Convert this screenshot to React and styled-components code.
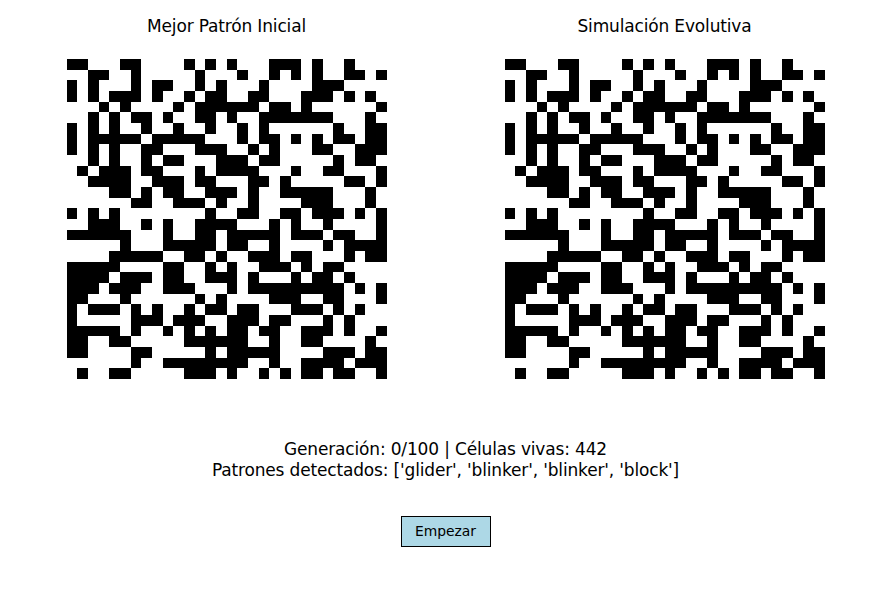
import React from 'react'
import styled, { createGlobalStyle } from 'styled-components'

const GlobalStyle = createGlobalStyle`
  html, body {
    margin: 0;
    padding: 0;
    background: #fff;
  }
`

const Figure = styled.div`
  width: 891px;
  height: 593px;
  box-sizing: border-box;
  padding-top: 16px;
  display: flex;
  flex-direction: column;
  align-items: center;
  font-family: "DejaVu Sans", sans-serif;
  color: #000;
  overflow: hidden;
`

const Panels = styled.div`
  display: flex;
  gap: 118px;
`

const Panel = styled.div`
  width: 320px;
  display: flex;
  flex-direction: column;
  align-items: center;
  gap: 22px;
`

const Title = styled.div`
  font-size: 17px;
  letter-spacing: -0.16px;
  line-height: 21px;
  white-space: nowrap;
`

const Board = styled.div`
  width: 320px;
  height: 320px;
  display: grid;
  grid-template-columns: repeat(30, 1fr);
  grid-template-rows: repeat(30, 1fr);
`

const Cell = styled.div`
  background: ${(p) => (p.$alive ? '#000' : '#fff')};
`

const Status = styled.div`
  margin-top: 60px;
  font-size: 17px;
  letter-spacing: -0.16px;
  line-height: 21px;
  text-align: center;
  white-space: nowrap;
`

const StartButton = styled.button`
  margin-top: 35px;
  width: 90px;
  height: 31px;
  padding: 0 0 2px;
  box-sizing: border-box;
  background: #add8e6;
  border: 1px solid #000;
  border-radius: 0;
  font-family: inherit;
  font-size: 13.89px;
  color: #000;
`

// alive columns for each row of the 30x30 board, as [from, to] runs
const RUNS = [
  [[0, 1], [5, 6], [11], [13], [15], [19, 21], [23], [26]],
  [[2, 3], [6], [12], [16], [19], [21], [23], [26, 27], [29]],
  [[0], [2], [6], [8, 9], [12], [14], [18], [23, 25]],
  [[0], [2], [4, 6], [8], [11], [13, 14], [17, 18], [22, 24], [26], [28]],
  [[3], [5], [10], [12, 17], [19, 20], [22], [29]],
  [[2], [4], [6, 7], [9], [12, 13], [15], [18, 24], [28]],
  [[0], [2], [4], [7], [10], [13], [16], [18], [25], [28, 29]],
  [[0], [2, 6], [8, 12], [16], [18, 19], [21], [23], [25, 26], [28, 29]],
  [[0], [2], [4], [7, 8], [12, 14], [17], [19], [23, 24], [27, 29]],
  [[2], [4], [7], [9, 10], [14, 16], [18, 19], [25], [27, 28]],
  [[1], [3, 5], [7, 8], [12], [14, 17], [21], [24, 25], [29]],
  [[2, 5], [8, 10], [12, 13], [17, 18], [20], [26, 27], [29]],
  [[4, 5], [7], [9, 10], [13, 15], [17], [20, 24], [28]],
  [[6, 7], [10, 12], [14], [17], [22, 24], [28]],
  [[0], [2], [4], [13], [16, 17], [20, 21], [23, 25], [27], [29]],
  [[2, 4], [7], [9], [12, 15], [19], [21], [24], [29]],
  [[0, 5], [9], [12, 13], [15, 19], [21, 23], [25, 26], [29]],
  [[5], [9, 13], [15, 16], [19], [24], [26, 29]],
  [[4, 8], [11, 12], [14], [17, 19], [21, 22], [26], [28, 29]],
  [[0, 4], [9, 10], [13], [15], [18, 20], [22], [24, 25]],
  [[0, 3], [5, 7], [9, 10], [13, 15], [17], [21], [23, 24], [26]],
  [[0, 2], [4, 6], [9, 11], [15], [17, 25], [27], [29]],
  [[0, 1], [5], [12], [14], [19, 21], [24, 25], [29]],
  [[0], [2, 4], [6], [8], [11], [13, 14], [16, 17], [21, 23], [25], [27]],
  [[0], [6, 8], [10, 12], [15, 17], [19, 20], [24], [26]],
  [[0, 4], [6], [9], [11], [13], [15, 16], [18, 19], [22, 24], [26], [29]],
  [[0, 1], [4, 5], [11, 16], [19], [22, 23], [28]],
  [[0, 1], [6, 7], [13], [15, 19], [24, 26], [28, 29]],
  [[6], [9, 16], [19], [22, 25], [27, 29]],
  [[1], [4, 5], [11, 13], [15], [18], [20], [22, 23], [25, 26], [29]],
]

const isAlive = (runs, col) =>
  runs.some(([from, to = from]) => col >= from && col <= to)

const LifeBoard = () => (
  <Board>
    {RUNS.flatMap((runs, row) =>
      Array.from({ length: 30 }, (_, col) => (
        <Cell key={`${row}-${col}`} $alive={isAlive(runs, col)} />
      ))
    )}
  </Board>
)

const App = () => {
  return (
    <Figure>
      <GlobalStyle />
      <Panels>
        <Panel>
          <Title>Mejor Patrón Inicial</Title>
          <LifeBoard />
        </Panel>
        <Panel>
          <Title>Simulación Evolutiva</Title>
          <LifeBoard />
        </Panel>
      </Panels>
      <Status>
        Generación: 0/100 | Células vivas: 442
        <br />
        Patrones detectados: ['glider', 'blinker', 'blinker', 'block']
      </Status>
      <StartButton>Empezar</StartButton>
    </Figure>
  )
}

export default App
